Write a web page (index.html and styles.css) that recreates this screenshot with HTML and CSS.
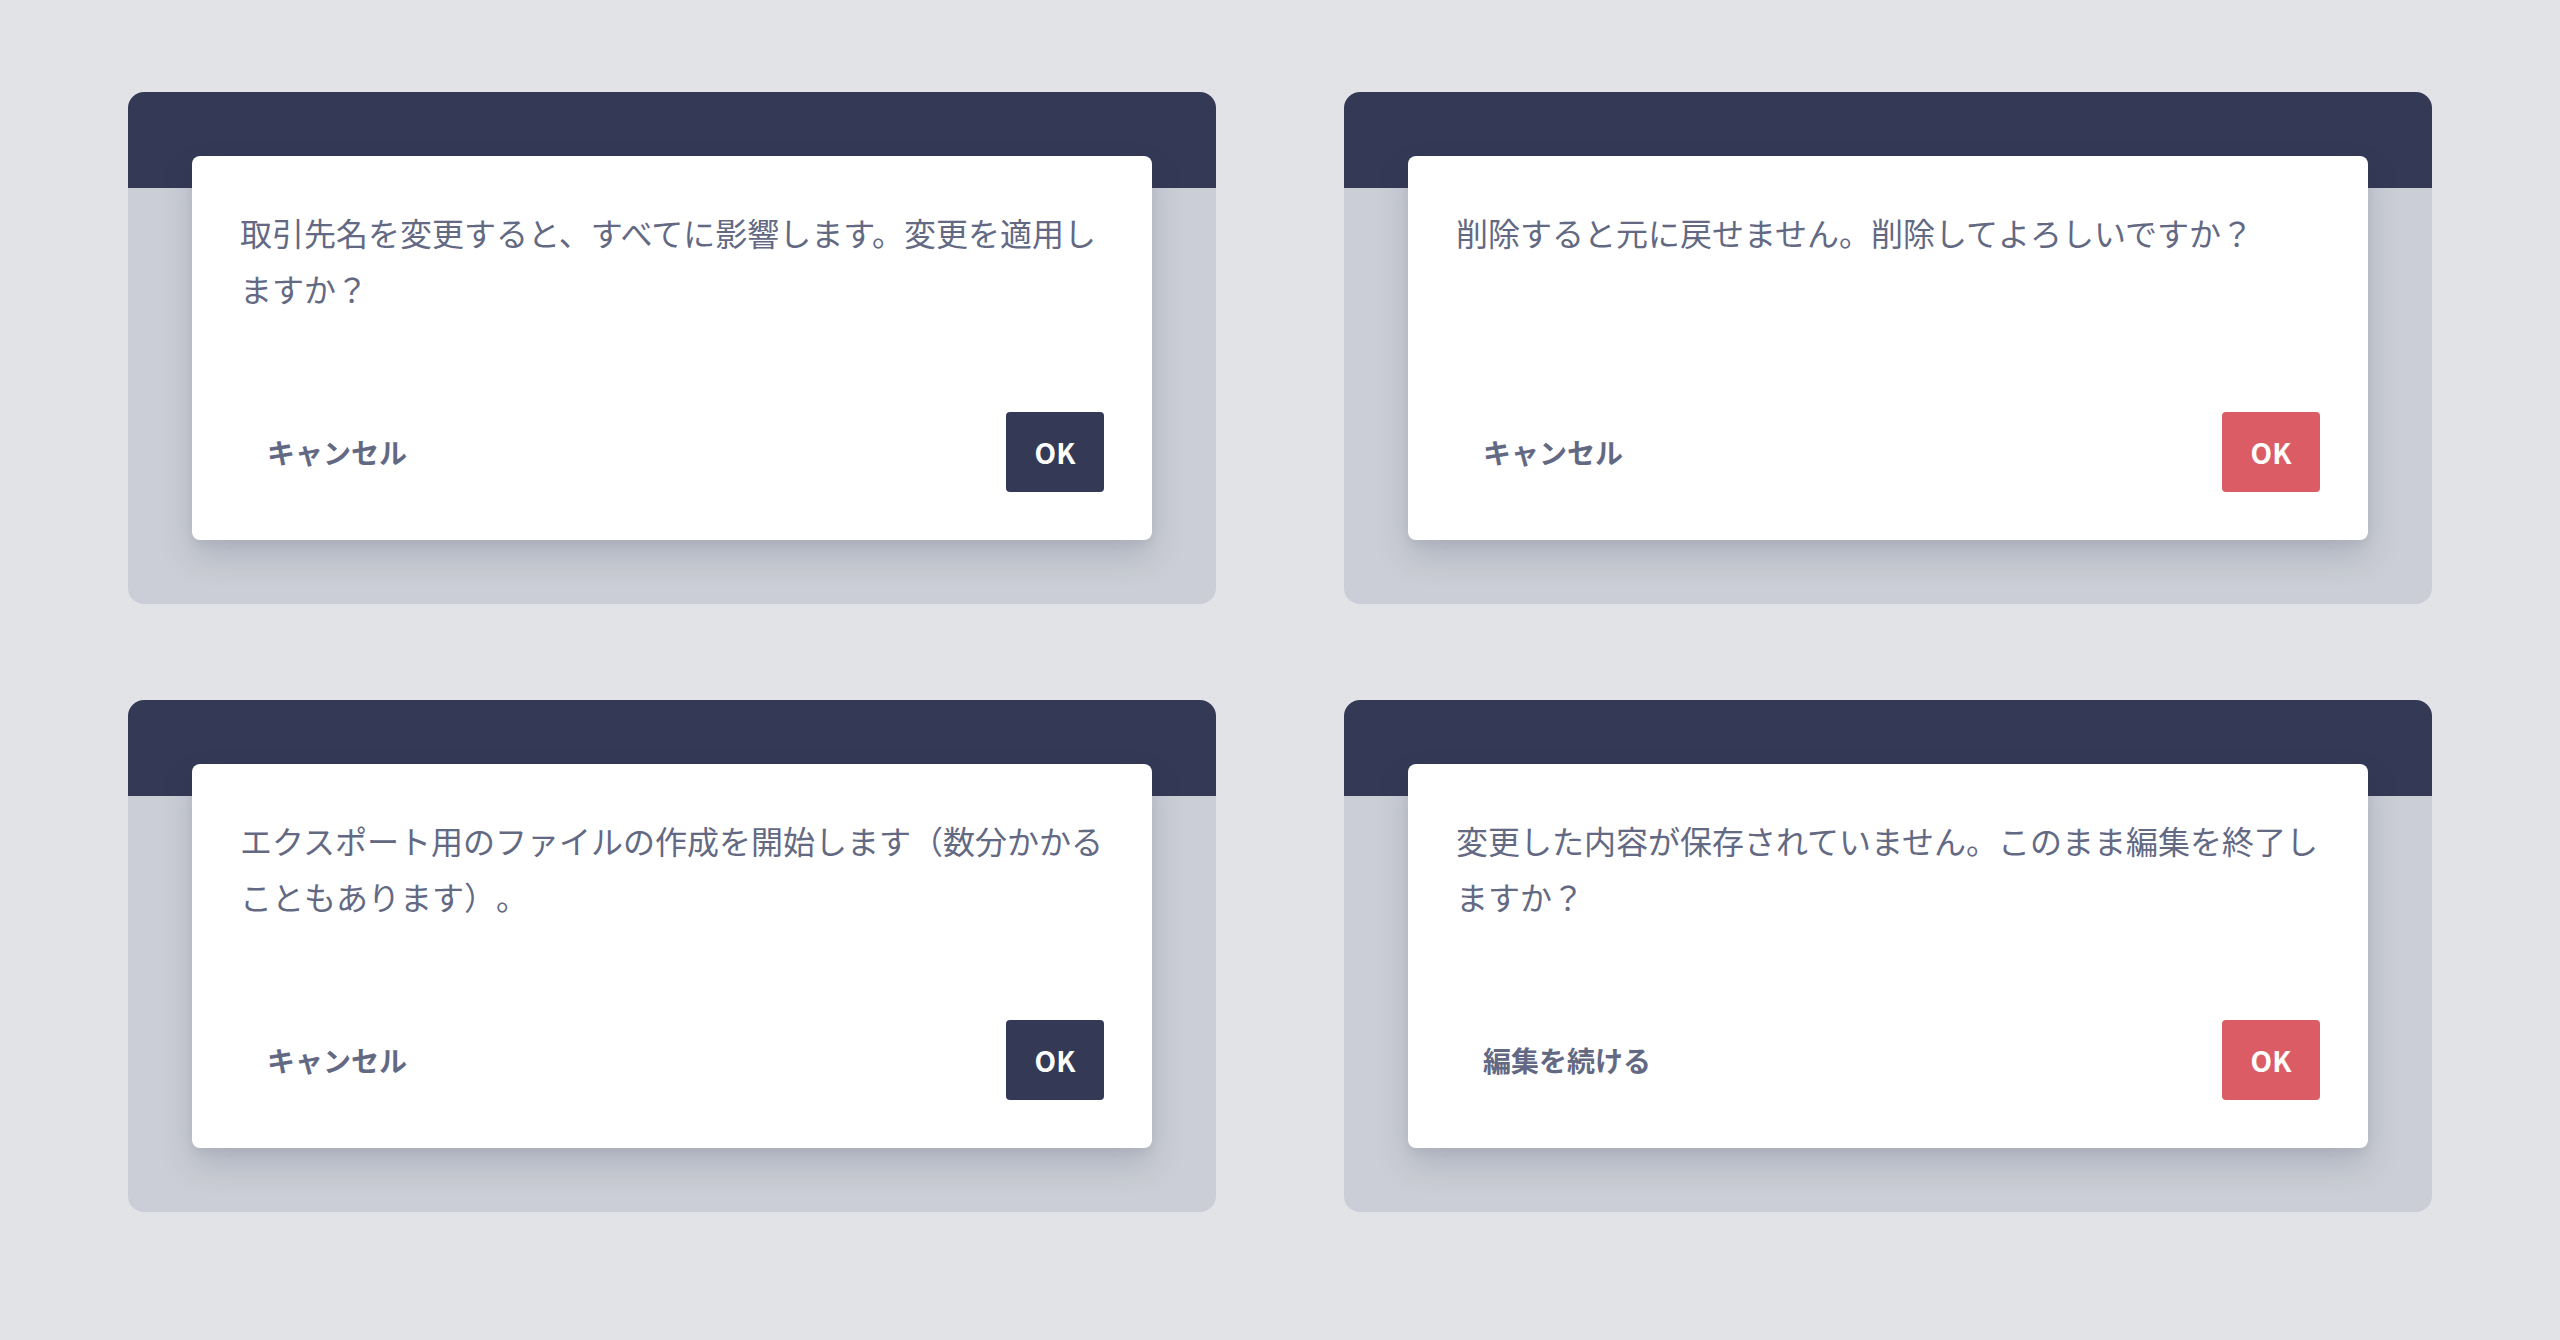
FILE: index.html
```html
<!DOCTYPE html>
<html lang="ja">
<head>
<meta charset="utf-8">
<title>Dialogs</title>
<link rel="stylesheet" href="styles.css">
</head>
<body>
<main class="grid">
  <section class="card">
    <div class="dialog">
      <p class="message">取引先名を変更すると、すべてに影響します。変更を適用しますか？</p>
      <div class="footer">
        <button class="btn btn-text">キャンセル</button>
        <button class="btn btn-primary">OK</button>
      </div>
    </div>
  </section>
  <section class="card">
    <div class="dialog">
      <p class="message">削除すると元に戻せません。削除してよろしいですか？</p>
      <div class="footer">
        <button class="btn btn-text">キャンセル</button>
        <button class="btn btn-danger">OK</button>
      </div>
    </div>
  </section>
  <section class="card">
    <div class="dialog">
      <p class="message">エクスポート用のファイルの作成を開始します（数分かかることもあります）。</p>
      <div class="footer">
        <button class="btn btn-text">キャンセル</button>
        <button class="btn btn-primary">OK</button>
      </div>
    </div>
  </section>
  <section class="card">
    <div class="dialog">
      <p class="message">変更した内容が保存されていません。このまま編集を終了しますか？</p>
      <div class="footer">
        <button class="btn btn-text">編集を続ける</button>
        <button class="btn btn-danger">OK</button>
      </div>
    </div>
  </section>
</main>
</body>
</html>
```

FILE: styles.css
```css
* { box-sizing: border-box; }
html, body {
  margin: 0;
  padding: 0;
  background: #e1e3e7;
  font-family: "Noto Sans CJK JP", "Noto Sans", sans-serif;
}
.grid {
  display: grid;
  grid-template-columns: 1088px 1088px;
  column-gap: 128px;
  row-gap: 96px;
  justify-content: center;
  padding-top: 92px;
}
.card {
  height: 512px;
  padding: 64px;
  border-radius: 16px;
  background: linear-gradient(to bottom, #343a55 0, #343a55 96px, #cbced6 96px, #cbced6 100%);
}
.dialog {
  width: 960px;
  height: 384px;
  background: #ffffff;
  border-radius: 8px;
  padding: 48px;
  display: flex;
  flex-direction: column;
  box-shadow: 0 16px 32px rgba(52, 58, 85, 0.18), 0 4px 8px rgba(52, 58, 85, 0.06);
}
.message {
  margin: 0;
  min-height: 112px;
  font-size: 32px;
  line-height: 56px;
  color: #636983;
  font-weight: 400;
  text-spacing-trim: space-all;
  font-feature-settings: "chws" 0, "halt" 0;
}
.footer {
  margin-top: auto;
  display: flex;
  justify-content: space-between;
  align-items: center;
}
.btn {
  height: 80px;
  min-width: 98px;
  padding: 0 28px;
  border: none;
  border-radius: 4px;
  font-family: "Noto Sans CJK JP", "Noto Sans", sans-serif;
  font-size: 28px;
  font-weight: 700;
  line-height: 80px;
  cursor: pointer;
}
.btn-text {
  background: transparent;
  color: #636983;
  padding: 0 27px;
}
.btn-primary {
  background: #343a55;
  color: #ffffff;
}
.btn-danger {
  background: #dc5c66;
  color: #ffffff;
}
```
